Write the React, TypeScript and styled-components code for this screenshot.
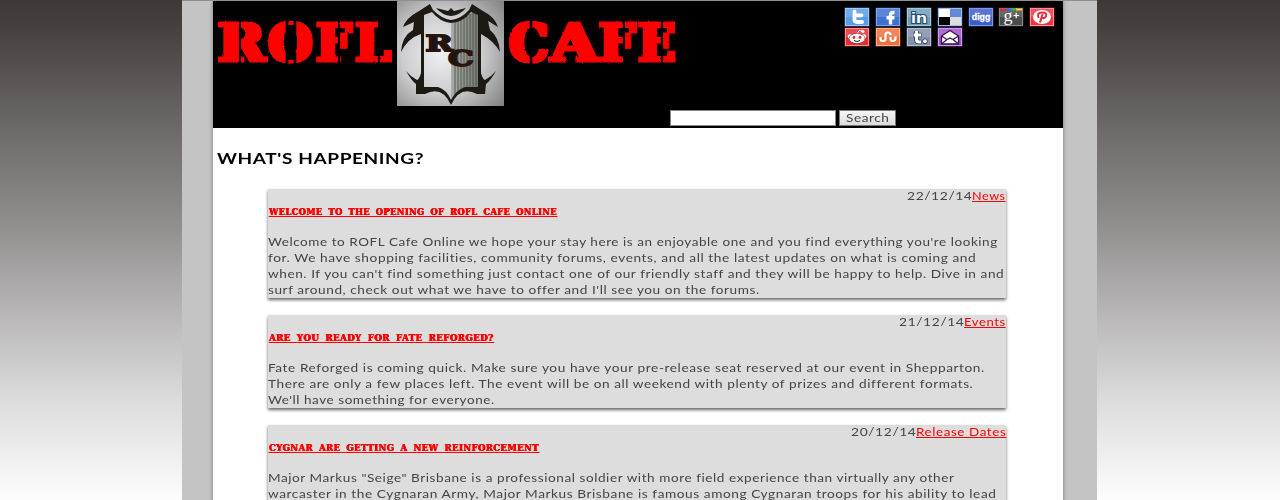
import React, { useLayoutEffect, useRef, useState } from 'react';
import styled, { createGlobalStyle } from 'styled-components';

const Global = createGlobalStyle`
  * { box-sizing: border-box; }
  html, body { margin: 0; padding: 0; height: 500px; overflow: hidden; }
  body {
    background: linear-gradient(#3e3836 0%, #433d3b 4%, #666261 22%, #8c8b89 43%, #b5b2b4 61%, #dcdcdc 80%, #fdfdfd 100%);
    font-family: "Lato", "Liberation Sans", sans-serif;
    color: #444;
  }
`;

const Shell = styled.div`
  width: 915px; height: 500px; margin-left: 182px; padding: 0 34px 0 31px;
  background: #c4c4c4; overflow: hidden; border-top: 1px solid #8f8f8f;
`;
const Page = styled.main`
  height: 520px; background: #fff; box-shadow: 0 0 4px rgba(0,0,0,.4);
`;
const Header = styled.header`
  height: 127px; background: #000; display: flex; flex-direction: column;
`;
const Banner = styled.div`
  display: flex; justify-content: space-between; height: 109px; padding-right: 4px;
`;
const Logo = styled.svg`display: block; margin-top: -1px;`;
const Socials = styled.div`
  display: grid; grid-template-columns: repeat(7, 26px); grid-auto-rows: 20px;
  column-gap: 4.9px; align-content: start; padding-top: 6px; width: 215px;
`;
const SearchForm = styled.form`
  display: flex; gap: 3px; padding-left: 457px; height: 16px;
`;
const SearchInput = styled.input`
  width: 166px; height: 16px; padding: 0; border: 1px solid #888; border-radius: 0; background: #fff;
`;
const SearchButton = styled.button`
  width: 57px; height: 16px; padding: 0 0 1px 6px; border: 1px solid #777; border-radius: 0; text-align: left;
  background: linear-gradient(#f6f6f6, #dcdcdc); color: #444; font: 12px/12px "Lato", sans-serif;
`;
const Heading = styled.h1`
  margin: 20px 0 0 4px; height: 20px; font-size: 16px; line-height: 20px; font-weight: 700; color: #000;
`;
const Feed = styled.section`
  display: flex; flex-direction: column; gap: 17px; margin: 21px 57px 0 55px;
`;
const Card = styled.article<{ $h: number }>`
  height: ${p => p.$h}px; flex: none; background: #ddd; box-shadow: 0 2px 3px rgba(0,0,0,.6);
`;
const Meta = styled.div`
  display: flex; justify-content: flex-end; height: 15px; font-size: 11.5px; line-height: 14px;
`;
const Category = styled.a`color: #f00; text-decoration: underline; text-underline-offset: 1px;`;
const Title = styled.h2`
  margin: 0; height: 30px; font: 900 9.6px/15px "DejaVu Serif", serif; color: #f00; word-spacing: 3px;
  text-shadow: .6px 0 #f00, -.4px 0 #f00; padding-left: .5px;
`;
const TitleLink = styled.a`
  text-decoration: underline; text-underline-offset: 1px; text-decoration-thickness: 1px;
`;
const Copy = styled.div`font-size: 12px; line-height: 16px; padding-left: .4px;`;
const Slot = styled.span<{ $w: number }>`display: block; width: ${p => p.$w}px; white-space: nowrap;`;
const Stretch = styled.span`display: inline-block; transform-origin: 0 50%; letter-spacing: .5px;`;

function Fit({ w, children }: { w: number; children: React.ReactNode }) {
  const ref = useRef<HTMLSpanElement>(null);
  const [k, setK] = useState(1);
  useLayoutEffect(() => {
    if (ref.current) setK(w / ref.current.offsetWidth);
  }, [w]);
  return <Slot $w={w}><Stretch ref={ref} style={{ transform: `scaleX(${k})` }}>{children}</Stretch></Slot>;
}

const letters: [string, number, number][] = [
  ['R', 3.5, 50], ['O', 54, 47], ['F', 102, 38], ['L', 141, 38],
  ['C', 295, 42], ['A', 336.5, 50], ['F', 384.5, 39.5], ['E', 424, 40],
];

function Wordmark() {
  return (
    <Logo width="470" height="107" viewBox="0 0 470 107">
      <defs>
        <radialGradient id="plate" cx=".42" cy=".5" r=".75">
          <stop offset="0" stopColor="#f1f1f3" /><stop offset=".5" stopColor="#cdcdcf" /><stop offset="1" stopColor="#838383" />
        </radialGradient>
        <linearGradient id="ribs" x1="0" x2="1"><stop offset="0" stopColor="#a9aca8" /><stop offset="1" stopColor="#767973" /></linearGradient>
        <filter id="fatten" x="-5%" y="-5%" width="110%" height="110%">
          <feMorphology operator="dilate" radius="2 1" />
        </filter>
        <filter id="rough" x="-5%" y="-5%" width="110%" height="110%">
          <feTurbulence type="fractalNoise" baseFrequency=".35" numOctaves="1" seed="4" result="n" />
          <feDisplacementMap in="SourceGraphic" in2="n" scale="2.2" xChannelSelector="R" yChannelSelector="G" />
        </filter>
      </defs>
      <g filter="url(#rough)">
        <g filter="url(#fatten)" fill="#f00" stroke="#f00" strokeWidth="1" fontFamily="DejaVu Serif" fontWeight="700" fontSize="52">
          {letters.map(([c, x, w], i) => (
            <text key={i} x={x + 1.5} y="61" textLength={w - 3} lengthAdjust="spacingAndGlyphs">{c}</text>
          ))}
        </g>
        <g stroke="#000" strokeWidth="2.6" fill="none">
          <path d="M27 20V66M166 20V66M411 20V66M449 20V66M126 20V66" strokeWidth="2.200" />
          <path d="M74 20V33M82 20V33M74 53V66M82 53V66M318 19V32M318 53V66" />
        </g>
        <path d="M74 25H81V60H74Z" fill="#000" />
      </g>
      <rect x="184" y="0" width="107" height="106" fill="url(#plate)" />
      <path d="M238 21L261 12L266 16V88Q250 87 238 101Z" fill="url(#ribs)" />
      <path d="M242 21V95M245 19V91M248 18V89M251 17V88M254 16V88M257 14V87M260 13V87M263 14V87" stroke="#4f524d" strokeWidth=".9" />
      <g fill="#1c1a13">
        <path d="M217 4L220 10Q229 19 238 20Q248 19 256 10L259 4L270 11Q282 17 285 27L275 21L277 30Q286 37 287 52Q281 41 268 34V73Q270 80 272 80Q278 77 283 71Q278 80 273 84L272 94H264Q247 85 238 105Q229 85 212 94H203V84Q198 80 193 71Q198 77 204 80Q206 80 208 73V34Q195 38 188 52Q189 36 200 30L201 22L190 27Q193 18 206 11ZM211 15V87H225Q234 90 238 100Q243 90 252 87H265V15L258 12Q249 23 238 23Q227 22 219 12Z" fillRule="evenodd" />
        <path d="M223 8L235 11L238 8L241 11L253 8Q247 15 238 16Q229 15 223 8Z" />
      </g>
      <g fill="#1a1512" stroke="#2a1410" strokeWidth="1.8" fontFamily="DejaVu Serif" fontWeight="700">
        <text x="212.500" y="50.500" fontSize="22" textLength="27.500" lengthAdjust="spacingAndGlyphs">R</text>
        <text x="235" y="66" fontSize="22" textLength="25.500" lengthAdjust="spacingAndGlyphs">C</text>
      </g>
    </Logo>
  );
}

const ico = { fontFamily: 'Liberation Sans', fontWeight: 700, fill: '#fff' };
const icons: [string, string, React.ReactNode][] = [
  ['#5b9ce6', '#9cc9f5', <path d="M10.500 4.500V12.500Q10.500 15 13 15H18M10.500 8.300H17.500" stroke="#fff" strokeWidth="3.800" fill="none" strokeLinecap="round" />],
  ['#3f72cf', '#7ca5ee', <path d="M19.500 5.500H18Q15.500 5.500 15.500 8V17.500M11.500 10.800H19.500" stroke="#fff" strokeWidth="3.400" fill="none" />],
  ['#6f9fba', '#a9c6d6', <text x="5" y="15.500" fontSize="15" textLength="16" lengthAdjust="spacingAndGlyphs" stroke="#234c70" strokeWidth="2" paintOrder="stroke" {...ico}>in</text>],
  ['#4d73d2', '#a5b9e8', <><path d="M2 2H13V10H2Z" fill="#fff" /><path d="M2 10H13V18H2Z" fill="#000" /><path d="M13 10H24V18H13Z" fill="#ddd" /></>],
  ['#3d5ccc', '#8298e3', <text x="3.800" y="12.800" fontSize="9.500" textLength="18.500" lengthAdjust="spacingAndGlyphs" {...ico} stroke="#fff" strokeWidth=".3">digg</text>],
  ['#4c4c4c', '#888', <><path d="M2 2.500H8" stroke="#e22" strokeWidth="2" /><path d="M8 2.500H13" stroke="#36e" strokeWidth="2" /><path d="M13 2.500H18" stroke="#2b4" strokeWidth="2" /><path d="M18 2.500H24" stroke="#fc2" strokeWidth="2" /><text x="5.500" y="14" fontSize="16" textLength="9" lengthAdjust="spacingAndGlyphs" {...ico} fontFamily="Liberation Serif" fontWeight="400">g</text><path d="M15.500 8.500H21M18.200 5.800V11.200" stroke="#fff" strokeWidth="1.200" /></>],
  ['#ee3542', '#ff929a', <><ellipse cx="13" cy="10" rx="9" ry="7" fill="#fff" /><path d="M9.500 11Q7.500 5.500 13 5.500Q18.500 5.500 17 9.500Q15.500 12 12.700 10.700M13.500 7L11 15.500" stroke="#e52d3b" strokeWidth="2" fill="none" /></>],
  ['#e32e34', '#ff9290', <><path d="M13 7L15 3.500L18 4" stroke="#fff" fill="none" /><circle cx="19" cy="4.500" r="1.500" fill="#fff" /><circle cx="6" cy="9.500" r="2.200" fill="#fff" /><circle cx="20" cy="9.500" r="2.200" fill="#fff" /><ellipse cx="13" cy="11.500" rx="8" ry="5" fill="#fff" stroke="#611" strokeWidth=".5" /><circle cx="10" cy="10.500" r="1.400" fill="#e22" /><circle cx="16" cy="10.500" r="1.400" fill="#e22" /><path d="M10 13.500Q13 15.500 16 13.500" stroke="#222" fill="none" /></>],
  ['#ee7140', '#ffae86', <path d="M5.500 10V12Q5.500 14 8 14Q10.500 14 10.500 12V8Q10.500 5.500 13 5.500Q15.500 5.500 15.500 8M15.500 10V12Q15.500 14 18 14Q20.500 14 20.500 11V9.500" stroke="#fff" strokeWidth="2.200" fill="none" />],
  ['#8290ac', '#b6bfd1', <><path d="M10.500 4V12.500Q10.500 15 13 15H15.500M7 8H15.500" stroke="#34425e" strokeWidth="4.600" fill="none" /><circle cx="19" cy="14.200" r="2.600" fill="#34425e" /><path d="M10.500 4V12.500Q10.500 15 13 15H15M7.500 8H15" stroke="#fff" strokeWidth="2.900" fill="none" /><circle cx="19" cy="14.200" r="1.900" fill="#fff" /></>],
  ['#9e55c9', '#cf9bea', <><path d="M4.500 9L13 3.500L21.500 9V17H4.500Z" fill="#fff" stroke="#35114c" strokeWidth="1.300" /><path d="M4.500 9L10 12.500L4.500 17M21.500 9L16 12.500L21.500 17M10 12.500L13 11L16 12.500" stroke="#35114c" strokeWidth="1.200" fill="none" /></>],
];

interface Post {
  h: number; date: string; cat: string; cw: number; title: string; tw: number; lines: [string, number][];
}

const posts: Post[] = [
  { h: 109, date: '22/12/14', cat: 'News', cw: 34, title: 'WELCOME TO THE OPENING OF ROFL CAFE ONLINE', tw: 288, lines: [
    ["Welcome to ROFL Cafe Online we hope your stay here is an enjoyable one and you find everything you're looking", 730],
    ['for. We have shopping facilities, community forums, events, and all the latest updates on what is coming and', 708],
    ["when. If you can't find something just contact one of our friendly staff and they will be happy to help. Dive in and", 736],
    ["surf around, check out what we have to offer and I'll see you on the forums.", 492]] },
  { h: 93, date: '21/12/14', cat: 'Events', cw: 42, title: 'ARE YOU READY FOR FATE REFORGED?', tw: 225, lines: [
    ['Fate Reforged is coming quick. Make sure you have your pre-release seat reserved at our event in Shepparton.', 717],
    ['There are only a few places left. The event will be on all weekend with plenty of prizes and different formats.', 705],
    ["We'll have something for everyone.", 227]] },
  { h: 109, date: '20/12/14', cat: 'Release Dates', cw: 90, title: 'CYGNAR ARE GETTING A NEW REINFORCEMENT', tw: 270, lines: [
    ['Major Markus "Seige" Brisbane is a professional soldier with more field experience than virtually any other', 686],
    ['warcaster in the Cygnaran Army, Major Markus Brisbane is famous among Cygnaran troops for his ability to lead', 729]] },
];

export default function App() {
  return (
    <>
      <Global />
      <Shell>
        <Page>
          <Header>
            <Banner>
              <Wordmark />
              <Socials>
                {icons.map(([bg, edge, art], i) => (
                  <svg key={i} width="26" height="20" viewBox="0 0 26 20">
                    <rect x=".5" y=".5" width="25" height="19" fill={bg} stroke="#000" strokeOpacity=".4" />
                    <rect x="1.500" y="1.500" width="23" height="17" fill={bg} stroke={edge} />
                    <rect x="2" y="2" width="22" height="8" fill="#fff" opacity=".15" />
                    {art}
                  </svg>
                ))}
              </Socials>
            </Banner>
            <SearchForm>
              <SearchInput aria-label="Search" />
              <SearchButton type="button"><Fit w={43}>Search</Fit></SearchButton>
            </SearchForm>
          </Header>
          <Heading><Fit w={207}>WHAT'S HAPPENING?</Fit></Heading>
          <Feed>
            {posts.map(p => (
              <Card key={p.date} $h={p.h}>
                <Meta><Fit w={65}>{p.date}</Fit><Fit w={p.cw}><Category>{p.cat}</Category></Fit></Meta>
                <Title><Fit w={p.tw}><TitleLink>{p.title}</TitleLink></Fit></Title>
                <Copy>{p.lines.map(([t, w]) => <Fit key={t} w={w}>{t}</Fit>)}</Copy>
              </Card>
            ))}
          </Feed>
        </Page>
      </Shell>
    </>
  );
}
